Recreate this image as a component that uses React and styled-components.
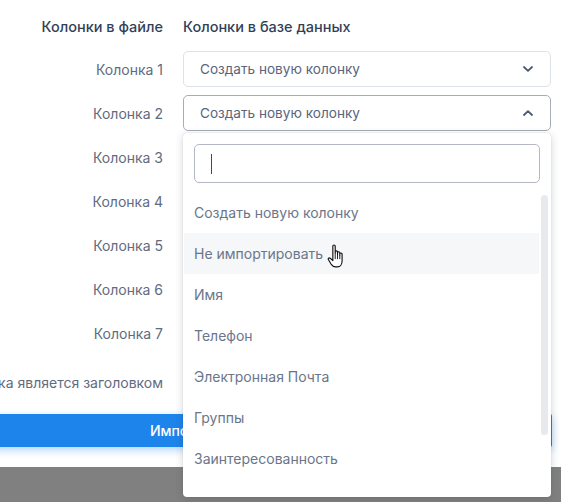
import React from "react";
import styled, { createGlobalStyle } from "styled-components";

const Global = createGlobalStyle`
  html, body { margin: 0; padding: 0; }
  body {
    background: #808080;
    font-family: Inter, "Noto Sans", "Liberation Sans", sans-serif;
    overflow: hidden;
    width: 561px;
    height: 502px;
  }
  * { box-sizing: border-box; }
`;

const Stage = styled.div`
  width: 561px;
  display: flex;
  justify-content: flex-end;
`;

const Modal = styled.div`
  flex: 0 0 760px;
  background: #fff;
  padding: 17px 9px 20px 0;
  display: flex;
  flex-direction: column;
  align-items: flex-end;
`;

const Grid = styled.div`
  display: grid;
  grid-template-columns: 163px 368px;
  column-gap: 20px;
  row-gap: 8px;
  align-items: center;
  margin-right: 1px;
`;

const HeadCell = styled.div`
  display: flex;
  justify-content: ${(p) => (p.$right ? "flex-end" : "flex-start")};
  white-space: nowrap;
  font-size: 14.5px;
  font-weight: 500;
  color: #333f57;
  line-height: 20px;
  margin-bottom: 6px;
`;

const Label = styled.div`
  display: flex;
  justify-content: flex-end;
  white-space: nowrap;
  font-size: 14px;
  color: #5f6b80;
  height: 36px;
  align-items: center;
`;

const SelectWrap = styled.div`
  position: relative;
`;

const SelectBox = styled.div`
  height: 36px;
  border: 1px solid ${(p) => (p.$open ? "#a7acb8" : "#dde1e8")};
  border-radius: 5px;
  display: flex;
  align-items: center;
  justify-content: space-between;
  padding: 0 16px 0 16px;
  font-size: 13.6px;
  color: #58657c;
  background: #fff;
`;

const Chevron = ({ up }) => (
  <svg width="10" height="6" viewBox="0 0 10 6" style={{ marginRight: 1 }}>
    <path
      d={up ? "M1 5 L5 1.2 L9 5" : "M1 1 L5 4.8 L9 1"}
      fill="none"
      stroke="#4a5870"
      strokeWidth="1.8"
      strokeLinecap="round"
      strokeLinejoin="round"
    />
  </svg>
);

const Dropdown = styled.div`
  position: absolute;
  left: 0;
  right: 0;
  top: 38px;
  height: 364px;
  background: #fff;
  border-radius: 4px;
  box-shadow: 0 2px 8px rgba(40, 50, 70, 0.2), 0 0 1px rgba(40, 50, 70, 0.25);
  display: flex;
  flex-direction: column;
  z-index: 10;
  overflow: hidden;
`;

const SearchInput = styled.div`
  margin: 11px 11px 9px 11px;
  height: 39px;
  border: 1px solid #b3b8c4;
  border-radius: 5px;
  display: flex;
  align-items: center;
  padding-left: 16px;
  flex: none;
`;

const Caret = styled.span`
  display: block;
  width: 1px;
  height: 20px;
  background: #3c4a60;
`;

const ListArea = styled.div`
  flex: 1;
  display: flex;
  min-height: 0;
`;

const List = styled.div`
  flex: 1;
  overflow: hidden;
  padding-bottom: 16px;
`;

const ScrollTrack = styled.div`
  flex: none;
  width: 7px;
  margin: 3px 3px 0 2px;
`;

const ScrollThumb = styled.div`
  height: 240px;
  border-radius: 4px;
  background: #e8e9ec;
`;

const Option = styled.div`
  height: 41px;
  display: flex;
  align-items: center;
  padding-left: 10px;
  margin-left: 1px;
  font-size: 14px;
  color: #6a768a;
  white-space: nowrap;
  background: ${(p) => (p.$hover ? "#f6f7f9" : "transparent")};
  position: relative;
`;

const CursorIcon = styled.svg`
  position: absolute;
  left: 143px;
  top: 11px;
`;

const Hand = () => (
  <CursorIcon width="20" height="26" viewBox="0 0 19 25">
    <path
      d="M5.5 2.2 C5.5 0.6 7.8 0.6 7.8 2.2 L7.8 9.5 L7.8 7.6 C7.8 6.2 10 6.2 10 7.6 L10 10 L10 8.5 C10 7.1 12.2 7.1 12.2 8.5 L12.2 10.5 L12.2 9.6 C12.2 8.3 14.4 8.3 14.4 9.6 L14.4 16 C14.4 19.5 12.6 22 10 22 L8 22 C6 22 5 21 3.8 19.3 L1.3 15.2 C0.6 14 1.9 12.8 3 13.7 L5.5 16 Z"
      fill="#fff"
      stroke="#111"
      strokeWidth="1.1"
      strokeLinejoin="round"
    />
    <path d="M7.8 10 L7.8 14.5 M10 10.2 L10 14.5 M12.2 10.6 L12.2 14.5" stroke="#111" strokeWidth="0.9" />
  </CursorIcon>
);

const CheckRow = styled.div`
  display: flex;
  justify-content: flex-end;
  white-space: nowrap;
  font-size: 14px;
  color: #5f6b80;
  height: 20px;
  align-items: center;
  margin-top: 21px;
  width: 163px;
  margin-right: 389px;
  gap: 8px;
`;

const CheckBox = styled.span`
  width: 16px;
  height: 16px;
  border: 1px solid #c3c8d2;
  border-radius: 3px;
  flex: none;
`;

const Button = styled.button`
  margin-top: 22px;
  width: 694px;
  height: 33px;
  border: none;
  border-radius: 2px;
  background: #1d84eb;
  color: #fff;
  font-family: inherit;
  font-size: 14px;
  font-weight: 500;
  box-shadow: 0 3px 8px rgba(29, 132, 235, 0.35);
  cursor: pointer;
`;

const options = [
  "Создать новую колонку",
  "Не импортировать",
  "Имя",
  "Телефон",
  "Электронная Почта",
  "Группы",
  "Заинтересованность",
];

export default function App() {
  const rows = [1, 2, 3, 4, 5, 6, 7];
  return (
    <>
      <Global />
      <Stage>
        <Modal>
          <Grid>
            <HeadCell $right>Колонки в файле</HeadCell>
            <HeadCell>Колонки в базе данных</HeadCell>
            {rows.map((n) => (
              <React.Fragment key={n}>
                <Label>Колонка {n}</Label>
                <SelectWrap>
                  <SelectBox $open={n === 2}>
                    <span>Создать новую колонку</span>
                    <Chevron up={n === 2} />
                  </SelectBox>
                  {n === 2 && (
                    <Dropdown>
                      <SearchInput>
                        <Caret />
                      </SearchInput>
                      <ListArea>
                        <List>
                          {options.map((o, i) => (
                            <Option key={o} $hover={i === 1}>
                              {o}
                              {i === 1 && <Hand />}
                            </Option>
                          ))}
                        </List>
                        <ScrollTrack>
                          <ScrollThumb />
                        </ScrollTrack>
                      </ListArea>
                    </Dropdown>
                  )}
                </SelectWrap>
              </React.Fragment>
            ))}
          </Grid>
          <CheckRow>
            <CheckBox />
            Первая строка является заголовком
          </CheckRow>
          <Button>Импортировать</Button>
        </Modal>
      </Stage>
    </>
  );
}
